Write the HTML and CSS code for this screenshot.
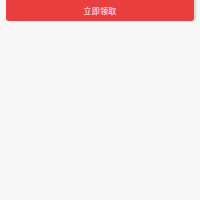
FILE: index.html
```html
<!DOCTYPE html>
<html lang="zh-CN">
<head>
    <meta charset="UTF-8">
    <meta name="viewport" content="width=device-width, initial-scale=1.0">
    <title>领取</title>
    <link rel="stylesheet" href="styles.css">
</head>
<body>
    <div class="bar">
        <button class="receive">立即领取</button>
    </div>
</body>
</html>
```

FILE: styles.css
```css
html, body {
    margin: 0;
    padding: 0;
    height: 100%;
    background-color: #f7f7f7;
    font-family: "Noto Sans CJK SC", "Noto Sans", sans-serif;
}
.bar {
    padding: 0 6px 0 6px;
}
.receive {
    display: block;
    width: 100%;
    height: 21px;
    border: none;
    border-radius: 0 0 3px 3px;
    background: #ea3f3f;
    color: #fff;
    font-family: inherit;
    font-size: 8px;
    letter-spacing: 0.3px;
    padding: 0;
    box-shadow: 2px 0 2px rgba(0, 0, 0, 0.15);
}
```
